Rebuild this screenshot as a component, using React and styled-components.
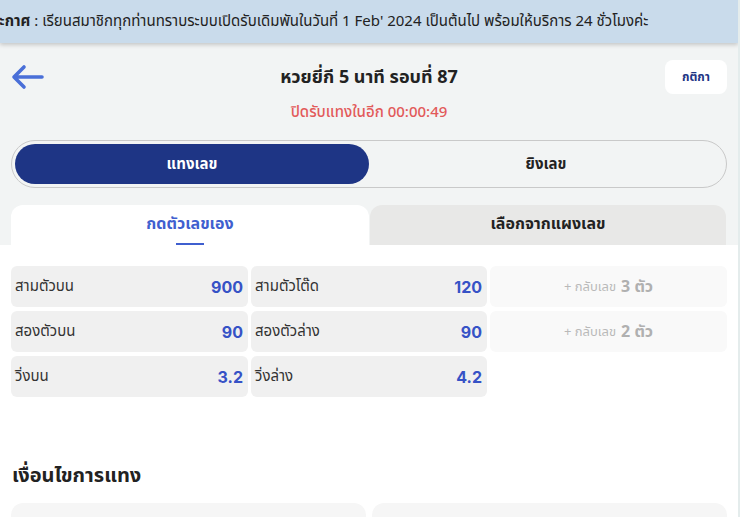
import React from "react";
import styled, { createGlobalStyle } from "styled-components";

const Global = createGlobalStyle`
  html, body { margin: 0; padding: 0; background: #fff; }
  body { font-family: "Noto Sans Thai", "Noto Sans", Inter, sans-serif; color: #222; }
  * { box-sizing: border-box; }
`;

const Page = styled.div`
  width: 740px;
  height: 517px;
  overflow: hidden;
  display: flex;
  flex-direction: column;
  background: #fff;
  border-right: 2px solid #e4ecec;
  & > * { flex-shrink: 0; }
`;

const Announce = styled.div`
  height: 43px;
  background: #c9dbeb;
  box-shadow: 0 2px 4px rgba(0, 0, 0, 0.18);
  display: flex;
  align-items: center;
  white-space: nowrap;
  overflow: hidden;
  font-size: 15px;
  color: #222;
  position: relative;
  z-index: 1;
`;

const AnnounceText = styled.span`
  margin-left: -18px;
  b { font-weight: 700; }
`;

const Top = styled.div`
  background: #f2f4f4;
  padding: 17px 11px 0 11px;
  display: flex;
  flex-direction: column;
`;

const HeaderRow = styled.div`
  display: grid;
  grid-template-columns: 62px 1fr 62px;
  align-items: center;
  height: 34px;
`;

const Back = styled.button`
  border: 0;
  background: none;
  padding: 0;
  display: flex;
  align-items: center;
  cursor: pointer;
`;

const Title = styled.h1`
  margin: 0;
  text-align: center;
  font-size: 18px;
  font-weight: 700;
  color: #222;
`;

const RuleButton = styled.button`
  width: 62px;
  height: 34px;
  border: 0;
  border-radius: 8px;
  background: #fff;
  color: #1e3585;
  font-family: inherit;
  font-size: 12px;
  font-weight: 700;
`;

const Countdown = styled.div`
  text-align: center;
  color: #e25a5a;
  font-size: 15px;
  font-weight: 500;
  margin-top: 7px;
`;

const Toggle = styled.div`
  margin-top: 16px;
  height: 48px;
  border: 1px solid #c9c9c9;
  border-radius: 24px;
  padding: 3px;
  display: grid;
  grid-template-columns: 1fr 1fr;
`;

const ToggleItem = styled.div`
  border-radius: 21px;
  display: flex;
  align-items: center;
  justify-content: center;
  font-size: 15px;
  font-weight: 700;
  background: ${(p) => (p.$active ? "#1e3585" : "transparent")};
  color: ${(p) => (p.$active ? "#fff" : "#222")};
`;

const Tabs = styled.div`
  margin-top: 17px;
  display: grid;
  grid-template-columns: 358px 1fr;
  gap: 1px;
  margin-right: 1px;
`;

const Tab = styled.div`
  height: 40px;
  border-radius: 12px 12px 0 0;
  background: ${(p) => (p.$active ? "#fff" : "#e8e8e7")};
  color: ${(p) => (p.$active ? "#3f5fcf" : "#222")};
  font-size: 16px;
  font-weight: 700;
  display: flex;
  align-items: center;
  justify-content: center;
  position: relative;
  padding-bottom: 2px;
`;

const TabLine = styled.span`
  position: absolute;
  bottom: 0;
  left: 50%;
  transform: translateX(-50%);
  width: 28px;
  height: 2px;
  background: #3f5fcf;
`;

const Body = styled.div`
  padding: 21px 11px 0 11px;
  display: flex;
  flex-direction: column;
`;

const Grid = styled.div`
  display: grid;
  grid-template-columns: 237px 236px 237px;
  grid-auto-rows: 41px;
  column-gap: 3px;
  row-gap: 4px;
`;

const Cell = styled.div`
  border-radius: 6px;
  background: #f0f0f0;
  display: flex;
  align-items: center;
  justify-content: space-between;
  padding: 0 5px 0 4px;
`;

const Label = styled.span`
  font-size: 15px;
  color: #333;
`;

const Value = styled.span`
  font-size: 16px;
  font-weight: 700;
  color: #3652c6;
  font-family: Inter, "Noto Sans", sans-serif;
`;

const ReverseCell = styled.div`
  border-radius: 6px;
  background: #f9f9f9;
  display: flex;
  align-items: center;
  justify-content: center;
  gap: 5px;
  color: #b9b9b9;
  font-size: 13px;
  b {
    font-size: 16px;
    font-weight: 700;
    color: #b0b0b0;
  }
`;

const Heading = styled.h2`
  margin: 64px 0 0 1px;
  font-size: 20px;
  font-weight: 700;
  color: #222;
`;

const Cards = styled.div`
  margin-top: 12px;
  display: grid;
  grid-template-columns: 355px 355px;
  gap: 6px;
`;

const Card = styled.div`
  height: 60px;
  border-radius: 12px;
  background: #f6f6f6;
`;

const rates = [
  { label: "สามตัวบน", value: "900" },
  { label: "สามตัวโต๊ด", value: "120" },
  { reverse: "3" },
  { label: "สองตัวบน", value: "90" },
  { label: "สองตัวล่าง", value: "90" },
  { reverse: "2" },
  { label: "วิ่งบน", value: "3.2" },
  { label: "วิ่งล่าง", value: "4.2" },
];

export default function App() {
  return (
    <Page>
      <Global />
      <Announce>
        <AnnounceText>
          <b>ประกาศ</b> : เรียนสมาชิกทุกท่านทราบระบบเปิดรับเดิมพันในวันที่ 1 Feb' 2024 เป็นต้นไป พร้อมให้บริการ 24 ชั่วโมงค่ะ
        </AnnounceText>
      </Announce>
      <Top>
        <HeaderRow>
          <Back aria-label="back">
            <svg width="34" height="26" viewBox="0 0 34 26" fill="none">
              <path d="M31 13H4M13 3L3 13l10 10" stroke="#4a6fd8" strokeWidth="3.6" strokeLinecap="round" strokeLinejoin="round" />
            </svg>
          </Back>
          <Title>หวยยี่กี 5 นาที รอบที่ 87</Title>
          <RuleButton>กติกา</RuleButton>
        </HeaderRow>
        <Countdown>ปิดรับแทงในอีก 00:00:49</Countdown>
        <Toggle>
          <ToggleItem $active>แทงเลข</ToggleItem>
          <ToggleItem>ยิงเลข</ToggleItem>
        </Toggle>
        <Tabs>
          <Tab $active>
            กดตัวเลขเอง
            <TabLine />
          </Tab>
          <Tab>เลือกจากแผงเลข</Tab>
        </Tabs>
      </Top>
      <Body>
        <Grid>
          {rates.map((r, i) =>
            r.reverse ? (
              <ReverseCell key={i}>
                + กลับเลข <b>{r.reverse} ตัว</b>
              </ReverseCell>
            ) : (
              <Cell key={i}>
                <Label>{r.label}</Label>
                <Value>{r.value}</Value>
              </Cell>
            )
          )}
        </Grid>
        <Heading>เงื่อนไขการแทง</Heading>
        <Cards>
          <Card />
          <Card />
        </Cards>
      </Body>
    </Page>
  );
}
